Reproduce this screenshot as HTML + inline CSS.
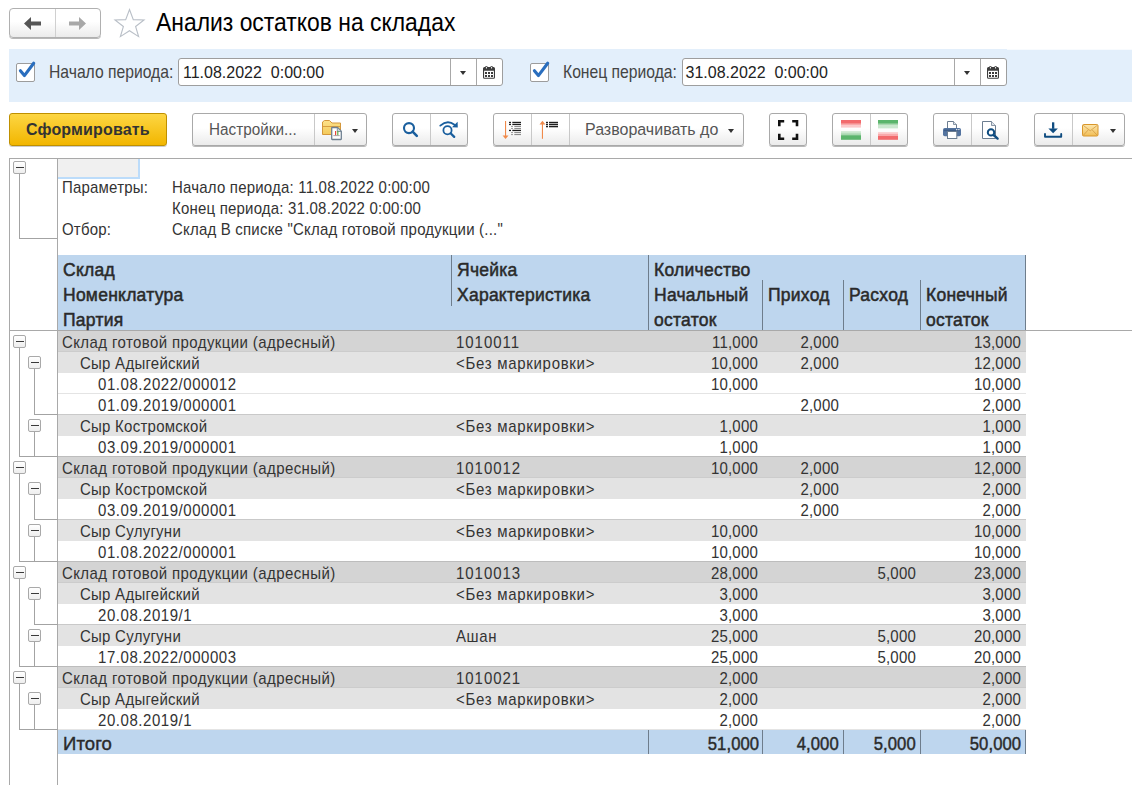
<!DOCTYPE html>
<html><head><meta charset="utf-8">
<style>
*{box-sizing:border-box;margin:0;padding:0}
html,body{width:1132px;height:785px;overflow:hidden;background:#fff;font-family:"Liberation Sans",sans-serif;position:relative}
.a{position:absolute}
.btn{position:absolute;border:1px solid #a9a9a9;border-radius:3px;background:linear-gradient(#ffffff 0%,#ffffff 45%,#ebebeb 100%);box-shadow:0 1px 0.5px rgba(0,0,0,.28)}
.dv{position:absolute;top:0;bottom:0;width:1px;background:#c8c8c8}
.lbl{position:absolute;font-size:15.7px;color:#444;white-space:nowrap;line-height:18px;transform:scaleY(1.12);transform-origin:0 14.3px}
.inp{position:absolute;border:1px solid #9e9e9e;border-radius:3px;background:#fff;height:28px}
.inp .v{position:absolute;left:4px;top:5px;font-size:16px;color:#222;line-height:18px;white-space:pre}
.inp .d{position:absolute;top:0;bottom:0;width:1px;background:#a8a8a8}
.tri{position:absolute;width:0;height:0;border-left:3.5px solid transparent;border-right:3.5px solid transparent;border-top:4px solid #333}
.cb{position:absolute;width:19px;height:19px;border:1px solid #9c9c9c;border-radius:2px;background:#fff}
.bt{position:absolute;font-size:16px;color:#555;white-space:nowrap;line-height:18px;transform:scaleY(1.06);transform-origin:0 14.5px}
svg{position:absolute;overflow:visible}
/* report */
.rep{position:absolute;left:9px;top:158px;width:1123px;height:627px;border-left:1px solid #a9a9a9;border-top:1px solid #a9a9a9}
.r{position:absolute;left:58px;width:968px;height:21px}
.l1{background:#d4d4d4;border-bottom:1px solid #cccccc}
.l2{background:#e3e3e3}
.l3{background:#fff;border-bottom:1px solid #e4e4e4}
.t{position:absolute;font-size:15px;letter-spacing:0.2px;color:#333;white-space:pre;line-height:23px;transform:scaleY(1.08);transform-origin:0 16.7px}
.n{text-align:right}
.h{position:absolute;font-size:17.5px;letter-spacing:0.25px;-webkit-text-stroke:0.5px #2a2a2a;color:#2a2a2a;white-space:pre;line-height:28px}
.bx{position:absolute;width:13px;height:13px;border:1px solid #a9a9a9;border-radius:2px;background:linear-gradient(#fff,#eeeeee)}
.bx:after{content:"";position:absolute;left:1.5px;top:5px;width:8px;height:1.3px;background:#3a3a3a}
.vl{position:absolute;width:1px;background:#a3a3a3}
.hl{position:absolute;height:1px;background:#a3a3a3}
.hv{position:absolute;width:1px;background:#6e7d8c}
</style></head><body>

<!-- nav -->
<div class="btn" style="left:9px;top:8px;width:92px;height:30px;border-radius:4px;border-color:#b0b0b0">
  <div class="dv" style="left:45px;background:#d0d0d0"></div>
</div>
<svg width="1132" height="60" style="left:0;top:0">
  <path d="M24 23.5 L31 17 V21.5 H41 V25.5 H31 V30 Z" fill="#555"/>
  <path d="M86 23.5 L79 17 V21.5 H69 V25.5 H79 V30 Z" fill="#a8a8a8"/>
  <path d="M129.5 9.5 L133.3 19.6 L144 19.9 L135.6 26.5 L138.6 36.6 L129.5 30.7 L120.4 36.6 L123.4 26.5 L115 19.9 L125.7 19.6 Z" fill="none" stroke="#b9bfc7" stroke-width="1.1"/>
</svg>
<div class="a" style="left:156px;top:8px;font-size:22.9px;color:#000;white-space:nowrap;line-height:30px;transform:scaleY(1.1);transform-origin:0 23px">Анализ остатков на складах</div>

<!-- filter panel -->
<div class="a" style="left:9px;top:49px;width:1123px;height:53px;background:#e3effb"></div>
<div class="a" style="left:1007px;top:49px;width:125px;height:1px;background:#f8fbfe"></div>
<div class="cb" style="left:16px;top:63px"></div>
<div class="lbl" style="left:49px;top:64px">Начало периода:</div>
<div class="inp" style="left:178px;top:58px;width:325px">
  <div class="v">11.08.2022  0:00:00</div>
  <div class="d" style="left:271px"></div>
  <div class="d" style="left:297px"></div>
  <div class="tri" style="left:281px;top:12px"></div>
</div>
<div class="cb" style="left:530px;top:63px"></div>
<div class="lbl" style="left:563px;top:64px">Конец периода:</div>
<div class="inp" style="left:682px;top:58px;width:325px">
  <div class="v" style="left:2.5px">31.08.2022  0:00:00</div>
  <div class="d" style="left:271px"></div>
  <div class="d" style="left:297px"></div>
  <div class="tri" style="left:281px;top:12px"></div>
</div>
<svg width="1132" height="110" style="left:0;top:0">
  <path d="M20.4 70.7 L24.4 75.6 L33.7 63.2" fill="none" stroke="#2a6ebe" stroke-width="3.1" stroke-linecap="round" stroke-linejoin="round"/>
  <path d="M534.4 70.7 L538.4 75.6 L547.7 63.2" fill="none" stroke="#2a6ebe" stroke-width="3.1" stroke-linecap="round" stroke-linejoin="round"/>
  <g id="cal1" fill="#3c3c3c">
    <path d="M483 68.5 Q483 67 484.5 67 H493.5 Q495 67 495 68.5 V77.3 Q495 78.8 493.5 78.8 H484.5 Q483 78.8 483 77.3 Z M484.1 70.8 V77.7 H493.9 V70.8 Z" fill-rule="evenodd"/>
    <circle cx="486.4" cy="67.4" r="1.5"/><circle cx="491.6" cy="67.4" r="1.5"/>
    <ellipse cx="486.4" cy="67.7" rx="0.55" ry="0.9" fill="#fff"/><ellipse cx="491.6" cy="67.7" rx="0.55" ry="0.9" fill="#fff"/>
    <rect x="485" y="72" width="2" height="2"/><rect x="488" y="72" width="2" height="2"/><rect x="491" y="72" width="2" height="2"/>
    <rect x="485" y="75" width="2" height="2"/><rect x="488" y="75" width="2" height="2"/><rect x="491" y="75" width="2" height="2"/>
  </g>
  <g fill="#3c3c3c" transform="translate(504 0)">
    <path d="M483 68.5 Q483 67 484.5 67 H493.5 Q495 67 495 68.5 V77.3 Q495 78.8 493.5 78.8 H484.5 Q483 78.8 483 77.3 Z M484.1 70.8 V77.7 H493.9 V70.8 Z" fill-rule="evenodd"/>
    <circle cx="486.4" cy="67.4" r="1.5"/><circle cx="491.6" cy="67.4" r="1.5"/>
    <ellipse cx="486.4" cy="67.7" rx="0.55" ry="0.9" fill="#fff"/><ellipse cx="491.6" cy="67.7" rx="0.55" ry="0.9" fill="#fff"/>
    <rect x="485" y="72" width="2" height="2"/><rect x="488" y="72" width="2" height="2"/><rect x="491" y="72" width="2" height="2"/>
    <rect x="485" y="75" width="2" height="2"/><rect x="488" y="75" width="2" height="2"/><rect x="491" y="75" width="2" height="2"/>
  </g>
</svg>

<!-- toolbar -->
<div class="a" style="left:9px;top:113px;width:158px;height:33px;border:1px solid #bf9000;border-radius:3px;background:linear-gradient(#fdd643,#f2b600);box-shadow:0 1px 0.5px rgba(0,0,0,.2)"></div>
<div class="a" style="left:26px;top:121px;font-size:16px;font-weight:bold;color:#333;line-height:18px;white-space:nowrap;letter-spacing:0.15px">Сформировать</div>

<div class="btn" style="left:192px;top:113px;width:175px;height:33px"><div class="dv" style="left:121px"></div></div>
<div class="bt" style="left:209px;top:121px;font-size:15.3px;transform:scaleY(1.1)">Настройки...</div>
<div class="tri" style="left:352px;top:129px"></div>

<div class="btn" style="left:392px;top:113px;width:76px;height:33px"><div class="dv" style="left:37px"></div></div>
<div class="btn" style="left:493px;top:113px;width:251px;height:33px"><div class="dv" style="left:37px"></div><div class="dv" style="left:75px"></div></div>
<div class="bt" style="left:585px;top:121px">Разворачивать до</div>
<div class="tri" style="left:728px;top:129px"></div>

<div class="btn" style="left:769px;top:113px;width:38px;height:33px"></div>
<div class="btn" style="left:832px;top:113px;width:76px;height:33px"><div class="dv" style="left:37px"></div></div>
<div class="btn" style="left:933px;top:113px;width:76px;height:33px"><div class="dv" style="left:37px"></div></div>
<div class="btn" style="left:1034px;top:113px;width:91px;height:33px"><div class="dv" style="left:37px"></div></div>
<div class="tri" style="left:1110px;top:129px"></div>

<svg width="1132" height="160" style="left:0;top:0">
  <!-- folder icon -->
  <defs>
    <linearGradient id="fg" x1="0" y1="0" x2="0" y2="1"><stop offset="0" stop-color="#fde28a"/><stop offset="1" stop-color="#f3c95a"/></linearGradient>
    <linearGradient id="eg" x1="0" y1="0" x2="0" y2="1"><stop offset="0" stop-color="#fde7ae"/><stop offset="1" stop-color="#f1bd55"/></linearGradient>
  </defs>
  <path d="M322.5 134.5 V122 L324.5 120.5 H329.5 L332 123 H340.5 V134.5 Z" fill="url(#fg)" stroke="#d4973a" stroke-width="1"/>
  <path d="M323 126.5 H340" stroke="#d4973a" stroke-width="0.9"/>
  <path d="M331.7 128 Q331.7 127.5 332.2 127.5 H337.5 L341.3 131.3 V139 Q341.3 139.5 340.8 139.5 H332.2 Q331.7 139.5 331.7 139 Z" fill="#fff" stroke="#6f8091" stroke-width="1.3"/>
  <path d="M337.3 127.8 V131.5 H341" fill="#c9d3dc" stroke="#6f8091" stroke-width="0.8"/>
  <rect x="335" y="131" width="1.2" height="4.3" fill="#e8473c"/><rect x="337.2" y="131" width="1.2" height="4.3" fill="#5bae4a"/>
  <rect x="333.3" y="135.3" width="6.4" height="0.8" fill="#9a8f95"/>
  <!-- magnifier -->
  <circle cx="409" cy="128.1" r="5" fill="none" stroke="#1a5f9e" stroke-width="2.1"/>
  <path d="M412.6 131.7 L416.8 135.9" stroke="#1a5f9e" stroke-width="2.6" stroke-linecap="round"/>
  <!-- magnifier refresh -->
  <circle cx="447.5" cy="130.2" r="4.1" fill="none" stroke="#1a5f9e" stroke-width="1.8"/>
  <path d="M450.6 133.3 L454.2 136.9" stroke="#1a5f9e" stroke-width="2.3" stroke-linecap="round"/>
  <path d="M440.3 125.6 Q447.5 119.5 454.5 124.8" fill="none" stroke="#1a5f9e" stroke-width="1.9" stroke-linecap="round"/>
  <path d="M457.6 121.8 L457.8 127.6 L452 127.2 Z" fill="#1a5f9e"/>
  <!-- sort desc -->
  <rect x="505" y="121" width="1.1" height="15" fill="#f08a4b"/>
  <path d="M502.6 135.6 L508.5 135.6 L505.55 139 Z" fill="#f08a4b"/>
  <g fill="#1e1e1e">
    <rect x="509" y="121.8" width="2" height="1.3"/><rect x="512.3" y="121.8" width="8.7" height="1.3"/>
    <rect x="509" y="123.8" width="2" height="1.3"/><rect x="512.3" y="123.8" width="8.7" height="1.3"/>
    <rect x="509" y="129.8" width="2" height="1.3"/><rect x="512.3" y="129.8" width="8.7" height="1.3"/>
  </g>
  <g fill="#8c8c8c">
    <rect x="511.2" y="125.9" width="1.6" height="1.1"/><rect x="514.3" y="125.9" width="6.7" height="1.1"/>
    <rect x="511.2" y="127.9" width="1.6" height="1.1"/><rect x="514.3" y="127.9" width="6.7" height="1.1"/>
    <rect x="511.2" y="132" width="1.6" height="1.1"/><rect x="514.3" y="132" width="6.7" height="1.1"/>
    <rect x="511.2" y="134" width="1.6" height="1.1"/><rect x="514.3" y="134" width="6.7" height="1.1"/>
  </g>
  <!-- sort asc -->
  <rect x="541.9" y="123.5" width="1.1" height="15.3" fill="#f08a4b"/>
  <path d="M539.5 124.5 L545.4 124.5 L542.45 120.8 Z" fill="#f08a4b"/>
  <g fill="#1e1e1e">
    <rect x="546" y="121.8" width="2" height="1.4"/><rect x="549" y="121.8" width="9" height="1.4"/>
    <rect x="546" y="123.8" width="2" height="1.4"/><rect x="549" y="123.8" width="9" height="1.4"/>
    <rect x="546" y="125.9" width="2" height="1.4"/><rect x="549" y="125.9" width="9" height="1.4"/>
  </g>
  <!-- fullscreen -->
  <path d="M779.3 126.2 V121.3 H784.2 M792.2 121.3 H797 V126.2 M797 133.8 V138.7 H792.2 M784.2 138.7 H779.3 V133.8" fill="none" stroke="#111" stroke-width="2.6"/>
  <!-- colors -->
  <rect x="841" y="120" width="20" height="3.8" fill="#f26a6c"/><rect x="841" y="123.8" width="20" height="1.8" fill="#f9a9ab"/><rect x="841" y="125.6" width="20" height="2" fill="#fcc9ca"/>
  <rect x="841" y="131.2" width="20" height="2" fill="#cbe8cf"/><rect x="841" y="133.2" width="20" height="2" fill="#a9d8b0"/><rect x="841" y="135.2" width="20" height="4.6" fill="#5bb56c"/>
  <rect x="878" y="120" width="20" height="3.8" fill="#5bb56c"/><rect x="878" y="123.8" width="20" height="1.8" fill="#a9d8b0"/><rect x="878" y="125.6" width="20" height="2.8" fill="#cbe8cf"/>
  <rect x="878" y="132.2" width="20" height="1.8" fill="#fcc9ca"/><rect x="878" y="134" width="20" height="2" fill="#f9a9ab"/><rect x="878" y="136" width="20" height="3.8" fill="#f26a6c"/>
  <!-- printer -->
  <path d="M947.5 128.5 V121.5 H953.5 L956.5 124.5 V128.5" fill="#fff" stroke="#6c7d90" stroke-width="1"/>
  <path d="M953.5 121.5 V124.5 H956.5" fill="#dde3ea" stroke="#6c7d90" stroke-width="0.8"/>
  <rect x="943" y="128" width="18" height="8.3" rx="1.8" fill="#5474a0"/>
  <rect x="944" y="129.6" width="16" height="1.6" fill="#3e5c86"/>
  <rect x="956" y="129" width="1.3" height="1.2" fill="#dfe6ef"/><rect x="958.2" y="129" width="1.3" height="1.2" fill="#dfe6ef"/>
  <rect x="947.5" y="131.5" width="9.3" height="7" fill="#fff" stroke="#6c7d90" stroke-width="1"/>
  <!-- preview -->
  <path d="M982.5 121.5 H991.5 L995.5 125.5 V138.5 H982.5 Z" fill="#fff" stroke="#6c7d90" stroke-width="1"/>
  <path d="M991.5 121.5 V125.5 H995.5" fill="#dde3ea" stroke="#6c7d90" stroke-width="0.8"/>
  <circle cx="991" cy="132.4" r="3.2" fill="#fff" stroke="#0f4c80" stroke-width="2"/>
  <path d="M993.6 135 L997.6 138.6" stroke="#0f4c80" stroke-width="2.4" stroke-linecap="round"/>
  <!-- download -->
  <rect x="1052" y="122.3" width="2.3" height="6.5" fill="#0f4c80"/>
  <path d="M1048.4 128.5 L1057.9 128.5 L1053.15 133.3 Z" fill="#0f4c80"/>
  <path d="M1045 134 V136.8 H1061.2 V134" fill="none" stroke="#0f4c80" stroke-width="1.9" stroke-linejoin="round" stroke-linecap="round"/>
  <!-- envelope -->
  <rect x="1082.5" y="124.5" width="15.5" height="11.5" rx="1.2" fill="url(#eg)" stroke="#d9962a" stroke-width="1"/>
  <path d="M1083.2 125.3 L1090.25 130.8 L1097.3 125.3 M1083.2 135.4 L1088.2 130 M1097.3 135.4 L1092.3 130" fill="none" stroke="#d29a42" stroke-width="0.8"/>
</svg>

<!-- report -->
<div class="rep"></div>
<div class="a" style="left:57px;top:158px;width:1px;height:627px;background:#a9a9a9"></div>
<div class="a" style="left:58px;top:159px;width:82px;height:20px;background:#f0f0f0;border-right:2px solid #bcdcfa;border-bottom:2px solid #bcdcfa"></div>
<div class="bx" style="left:13px;top:161px"></div>
<div class="vl" style="left:19px;top:174px;height:65px"></div>
<div class="hl" style="left:19px;top:238px;width:38px"></div>

<div class="t" style="left:62px;top:176px">Параметры:</div>
<div class="t" style="left:172px;top:176px">Начало периода: 11.08.2022 0:00:00</div>
<div class="t" style="left:172px;top:197px">Конец периода: 31.08.2022 0:00:00</div>
<div class="t" style="left:62px;top:218px">Отбор:</div>
<div class="t" style="left:172px;top:218px">Склад В списке "Склад готовой продукции (..."</div>

<!-- header -->
<div class="a" style="left:58px;top:255px;width:967px;height:75px;background:#bed6ee"></div>
<div class="hv" style="left:451px;top:255px;height:51px"></div>
<div class="hv" style="left:648px;top:255px;height:75px"></div>
<div class="hv" style="left:762px;top:280px;height:50px"></div>
<div class="hv" style="left:843px;top:280px;height:50px"></div>
<div class="hv" style="left:920px;top:280px;height:50px"></div>
<div class="hv" style="left:1025px;top:255px;height:75px"></div>
<div class="a" style="left:9px;top:330px;width:1123px;height:1px;background:#a9a9a9"></div>
<div class="h" style="left:63px;top:256px">Склад</div>
<div class="h" style="left:63px;top:281px">Номенклатура</div>
<div class="h" style="left:63px;top:306px">Партия</div>
<div class="h" style="left:457px;top:256px">Ячейка</div>
<div class="h" style="left:457px;top:281px">Характеристика</div>
<div class="h" style="left:654px;top:256px">Количество</div>
<div class="h" style="left:654px;top:281px">Начальный</div>
<div class="h" style="left:654px;top:306px">остаток</div>
<div class="h" style="left:768px;top:281px">Приход</div>
<div class="h" style="left:849px;top:281px">Расход</div>
<div class="h" style="left:926px;top:281px">Конечный</div>
<div class="h" style="left:926px;top:306px">остаток</div>

<div class="r l1" style="top:331px"></div>
<div class="t" style="top:331px;left:62px;letter-spacing:0.4px">Склад готовой продукции (адресный)</div>
<div class="t" style="top:331px;left:456px;letter-spacing:0.95px">1010011</div>
<div class="t n" style="top:331px;right:374px">11,000</div>
<div class="t n" style="top:331px;right:293px">2,000</div>
<div class="t n" style="top:331px;right:111px">13,000</div>
<div class="r l2" style="top:352px"></div>
<div class="t" style="top:352px;left:80px;letter-spacing:0.25px">Сыр Адыгейский</div>
<div class="t" style="top:352px;left:456px;letter-spacing:0.7px">&lt;Без маркировки&gt;</div>
<div class="t n" style="top:352px;right:374px">10,000</div>
<div class="t n" style="top:352px;right:293px">2,000</div>
<div class="t n" style="top:352px;right:111px">12,000</div>
<div class="r l3" style="top:373px"></div>
<div class="t" style="top:373px;left:98px;letter-spacing:0.55px">01.08.2022/000012</div>
<div class="t n" style="top:373px;right:374px">10,000</div>
<div class="t n" style="top:373px;right:111px">10,000</div>
<div class="r l3" style="top:394px"></div>
<div class="t" style="top:394px;left:98px;letter-spacing:0.55px">01.09.2019/000001</div>
<div class="t n" style="top:394px;right:293px">2,000</div>
<div class="t n" style="top:394px;right:111px">2,000</div>
<div class="r l2" style="top:415px"></div>
<div class="t" style="top:415px;left:80px;letter-spacing:0.25px">Сыр Костромской</div>
<div class="t" style="top:415px;left:456px;letter-spacing:0.7px">&lt;Без маркировки&gt;</div>
<div class="t n" style="top:415px;right:374px">1,000</div>
<div class="t n" style="top:415px;right:111px">1,000</div>
<div class="r l3" style="top:436px"></div>
<div class="t" style="top:436px;left:98px;letter-spacing:0.55px">03.09.2019/000001</div>
<div class="t n" style="top:436px;right:374px">1,000</div>
<div class="t n" style="top:436px;right:111px">1,000</div>
<div class="r l1" style="top:457px"></div>
<div class="t" style="top:457px;left:62px;letter-spacing:0.4px">Склад готовой продукции (адресный)</div>
<div class="t" style="top:457px;left:456px;letter-spacing:0.95px">1010012</div>
<div class="t n" style="top:457px;right:374px">10,000</div>
<div class="t n" style="top:457px;right:293px">2,000</div>
<div class="t n" style="top:457px;right:111px">12,000</div>
<div class="r l2" style="top:478px"></div>
<div class="t" style="top:478px;left:80px;letter-spacing:0.25px">Сыр Костромской</div>
<div class="t" style="top:478px;left:456px;letter-spacing:0.7px">&lt;Без маркировки&gt;</div>
<div class="t n" style="top:478px;right:293px">2,000</div>
<div class="t n" style="top:478px;right:111px">2,000</div>
<div class="r l3" style="top:499px"></div>
<div class="t" style="top:499px;left:98px;letter-spacing:0.55px">03.09.2019/000001</div>
<div class="t n" style="top:499px;right:293px">2,000</div>
<div class="t n" style="top:499px;right:111px">2,000</div>
<div class="r l2" style="top:520px"></div>
<div class="t" style="top:520px;left:80px;letter-spacing:0.25px">Сыр Сулугуни</div>
<div class="t" style="top:520px;left:456px;letter-spacing:0.7px">&lt;Без маркировки&gt;</div>
<div class="t n" style="top:520px;right:374px">10,000</div>
<div class="t n" style="top:520px;right:111px">10,000</div>
<div class="r l3" style="top:541px"></div>
<div class="t" style="top:541px;left:98px;letter-spacing:0.55px">01.08.2022/000001</div>
<div class="t n" style="top:541px;right:374px">10,000</div>
<div class="t n" style="top:541px;right:111px">10,000</div>
<div class="r l1" style="top:562px"></div>
<div class="t" style="top:562px;left:62px;letter-spacing:0.4px">Склад готовой продукции (адресный)</div>
<div class="t" style="top:562px;left:456px;letter-spacing:0.95px">1010013</div>
<div class="t n" style="top:562px;right:374px">28,000</div>
<div class="t n" style="top:562px;right:216px">5,000</div>
<div class="t n" style="top:562px;right:111px">23,000</div>
<div class="r l2" style="top:583px"></div>
<div class="t" style="top:583px;left:80px;letter-spacing:0.25px">Сыр Адыгейский</div>
<div class="t" style="top:583px;left:456px;letter-spacing:0.7px">&lt;Без маркировки&gt;</div>
<div class="t n" style="top:583px;right:374px">3,000</div>
<div class="t n" style="top:583px;right:111px">3,000</div>
<div class="r l3" style="top:604px"></div>
<div class="t" style="top:604px;left:98px;letter-spacing:0.55px">20.08.2019/1</div>
<div class="t n" style="top:604px;right:374px">3,000</div>
<div class="t n" style="top:604px;right:111px">3,000</div>
<div class="r l2" style="top:625px"></div>
<div class="t" style="top:625px;left:80px;letter-spacing:0.25px">Сыр Сулугуни</div>
<div class="t" style="top:625px;left:456px;letter-spacing:0.6px">Ашан</div>
<div class="t n" style="top:625px;right:374px">25,000</div>
<div class="t n" style="top:625px;right:216px">5,000</div>
<div class="t n" style="top:625px;right:111px">20,000</div>
<div class="r l3" style="top:646px"></div>
<div class="t" style="top:646px;left:98px;letter-spacing:0.55px">17.08.2022/000003</div>
<div class="t n" style="top:646px;right:374px">25,000</div>
<div class="t n" style="top:646px;right:216px">5,000</div>
<div class="t n" style="top:646px;right:111px">20,000</div>
<div class="r l1" style="top:667px"></div>
<div class="t" style="top:667px;left:62px;letter-spacing:0.4px">Склад готовой продукции (адресный)</div>
<div class="t" style="top:667px;left:456px;letter-spacing:0.95px">1010021</div>
<div class="t n" style="top:667px;right:374px">2,000</div>
<div class="t n" style="top:667px;right:111px">2,000</div>
<div class="r l2" style="top:688px"></div>
<div class="t" style="top:688px;left:80px;letter-spacing:0.25px">Сыр Адыгейский</div>
<div class="t" style="top:688px;left:456px;letter-spacing:0.7px">&lt;Без маркировки&gt;</div>
<div class="t n" style="top:688px;right:374px">2,000</div>
<div class="t n" style="top:688px;right:111px">2,000</div>
<div class="r l3" style="top:709px"></div>
<div class="t" style="top:709px;left:98px;letter-spacing:0.55px">20.08.2019/1</div>
<div class="t n" style="top:709px;right:374px">2,000</div>
<div class="t n" style="top:709px;right:111px">2,000</div>
<div class="vl" style="left:19px;top:347px;height:110px"></div>
<div class="hl" style="left:19px;top:456px;width:39px"></div>
<div class="bx" style="left:13px;top:335px"></div>
<div class="vl" style="left:34px;top:368px;height:47px"></div>
<div class="hl" style="left:34px;top:414px;width:24px"></div>
<div class="bx" style="left:28px;top:356px"></div>
<div class="vl" style="left:34px;top:431px;height:26px"></div>
<div class="hl" style="left:34px;top:456px;width:24px"></div>
<div class="bx" style="left:28px;top:419px"></div>
<div class="vl" style="left:19px;top:473px;height:89px"></div>
<div class="hl" style="left:19px;top:561px;width:39px"></div>
<div class="bx" style="left:13px;top:461px"></div>
<div class="vl" style="left:34px;top:494px;height:26px"></div>
<div class="hl" style="left:34px;top:519px;width:24px"></div>
<div class="bx" style="left:28px;top:482px"></div>
<div class="vl" style="left:34px;top:536px;height:26px"></div>
<div class="hl" style="left:34px;top:561px;width:24px"></div>
<div class="bx" style="left:28px;top:524px"></div>
<div class="vl" style="left:19px;top:578px;height:89px"></div>
<div class="hl" style="left:19px;top:666px;width:39px"></div>
<div class="bx" style="left:13px;top:566px"></div>
<div class="vl" style="left:34px;top:599px;height:26px"></div>
<div class="hl" style="left:34px;top:624px;width:24px"></div>
<div class="bx" style="left:28px;top:587px"></div>
<div class="vl" style="left:34px;top:641px;height:26px"></div>
<div class="hl" style="left:34px;top:666px;width:24px"></div>
<div class="bx" style="left:28px;top:629px"></div>
<div class="vl" style="left:19px;top:683px;height:47px"></div>
<div class="hl" style="left:19px;top:729px;width:39px"></div>
<div class="bx" style="left:13px;top:671px"></div>
<div class="vl" style="left:34px;top:704px;height:26px"></div>
<div class="hl" style="left:34px;top:729px;width:24px"></div>
<div class="bx" style="left:28px;top:692px"></div>
<div class="a" style="left:58px;top:414px;width:968px;height:1px;background:#c9c9c9"></div>
<div class="a" style="left:58px;top:456px;width:968px;height:1px;background:#c9c9c9"></div>
<div class="a" style="left:58px;top:519px;width:968px;height:1px;background:#c9c9c9"></div>
<div class="a" style="left:58px;top:561px;width:968px;height:1px;background:#c9c9c9"></div>
<div class="a" style="left:58px;top:624px;width:968px;height:1px;background:#c9c9c9"></div>
<div class="a" style="left:58px;top:666px;width:968px;height:1px;background:#c9c9c9"></div>
<div class="a" style="left:58px;top:456px;width:968px;height:1px;background:#bdbdbd"></div>
<div class="a" style="left:58px;top:561px;width:968px;height:1px;background:#bdbdbd"></div>
<div class="a" style="left:58px;top:666px;width:968px;height:1px;background:#bdbdbd"></div>

<!-- total -->
<div class="a" style="left:58px;top:730px;width:967px;height:24px;background:#bed6ee"></div>
<div class="hv" style="left:648px;top:730px;height:24px"></div>
<div class="hv" style="left:762px;top:730px;height:24px"></div>
<div class="hv" style="left:843px;top:730px;height:24px"></div>
<div class="hv" style="left:920px;top:730px;height:24px"></div>
<div class="hv" style="left:1025px;top:730px;height:24px"></div>
<div class="h" style="left:63px;top:730px;line-height:27px;font-size:18.5px;letter-spacing:0.1px;-webkit-text-stroke:0.4px #2a2a2a">Итого</div>
<div class="h n" style="right:373px;top:730px;line-height:27px;font-size:18.5px;letter-spacing:0.1px;transform:scaleX(0.9);transform-origin:right;-webkit-text-stroke:0.45px #2a2a2a">51,000</div>
<div class="h n" style="right:293px;top:730px;line-height:27px;font-size:18.5px;letter-spacing:0.1px;transform:scaleX(0.9);transform-origin:right;-webkit-text-stroke:0.45px #2a2a2a">4,000</div>
<div class="h n" style="right:216px;top:730px;line-height:27px;font-size:18.5px;letter-spacing:0.1px;transform:scaleX(0.9);transform-origin:right;-webkit-text-stroke:0.45px #2a2a2a">5,000</div>
<div class="h n" style="right:111px;top:730px;line-height:27px;font-size:18.5px;letter-spacing:0.1px;transform:scaleX(0.9);transform-origin:right;-webkit-text-stroke:0.45px #2a2a2a">50,000</div>
</body></html>
